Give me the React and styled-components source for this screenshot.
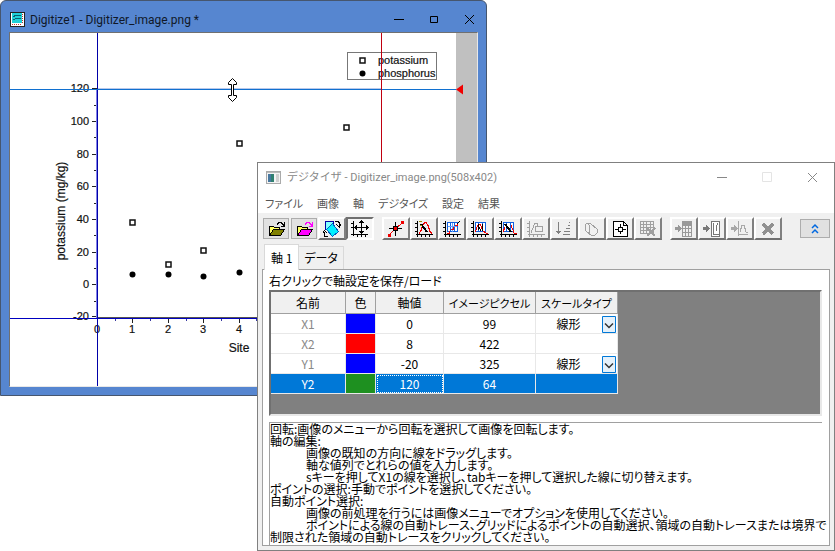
import React from 'react';
import styled, { createGlobalStyle, css } from 'styled-components';

const ui = 'Roboto, "Noto Sans CJK JP", sans-serif';
const gothic = '"Noto Sans CJK JP", sans-serif';

const GlobalStyle = createGlobalStyle`
* {
  box-sizing: border-box;
}

body {
  margin: 0;
  background: #fff;
  color: #000;
  font-family: ${gothic};
  font-size: 12px;
  font-feature-settings: "palt";
}

button, select {
  font: inherit;
  font-feature-settings: inherit;
  color: inherit;
  margin: 0;
}
`;

const majorY = [
  ['120', 88], ['100', 121], ['80', 154], ['60', 186],
  ['40', 219], ['20', 252], ['0', 284], ['-20', 316],
];
const minorY = [105, 137, 170, 203, 235, 268, 301];
const majorX = [['0', 97], ['1', 132], ['2', 168], ['3', 203], ['4', 239]];
const minorX = [115, 150, 186, 221, 256];
const potassium = [[132, 222], [168, 264], [203, 250], [239, 143], [346, 127], [362, 60]];
const phosphorus = [[132, 274], [168, 274], [203, 276], [239, 272], [362, 73]];

function Chart() {
  return (
    <ChartSvg viewBox="10 33 467 353" role="img" aria-label="potassium / phosphorus">
      <rect x="10" y="33" width="467" height="353" fill="#fff" />
      <rect x="456" y="33" width="21" height="353" fill="#c0c0c0" />
      <g stroke="#222">
        {majorY.map(([t, y]) => <path key={t} d={`M92 ${y + 0.5}h5`} />)}
        {minorY.map(y => <path key={y} d={`M94 ${y + 0.5}h3`} />)}
        {majorX.map(([t, x]) => <path key={t} d={`M${x + 0.5} 318v5`} />)}
        {minorX.map(x => <path key={x} d={`M${x + 0.5} 318v3`} stroke="#3838a0" />)}
      </g>
      <g fontSize="11" fill="#111" stroke="#111" strokeWidth="0.2">
        {majorY.map(([t, y]) => <text key={t} x="89" y={y + 4} textAnchor="end">{t}</text>)}
        {majorX.map(([t, x]) => <text key={t} x={x} y="333" textAnchor="middle">{t}</text>)}
        <text x="378" y="64">potassium</text>
        <text x="378" y="77">phosphorus</text>
        <text x="239" y="352" fontSize="12" textAnchor="middle">Site</text>
        <text fontSize="12" textAnchor="middle" transform="translate(65 211) rotate(-90)">potassium (mg/kg)</text>
      </g>
      <rect x="347.5" y="52.5" width="89" height="27" fill="none" stroke="#777" />
      {potassium.map(([x, y]) => (
        <rect key={x} x={x - 2} y={y - 2} width="5" height="5" fill="#fff" stroke="#111" strokeWidth="1.5" />
      ))}
      {phosphorus.map(([x, y]) => <circle key={x} cx={x + 0.5} cy={y + 0.5} r="3" />)}
      <g shapeRendering="crispEdges">
        <rect x="97" y="317" width="383" height="1" fill="#555" />
        <rect x="97" y="33" width="1" height="353" fill="#0000a8" />
        <rect x="96" y="89" width="1" height="229" fill="#8080e8" />
        <rect x="10" y="318" width="446" height="1" fill="#0000c0" />
        <rect x="98" y="88" width="283" height="1" fill="#b8c8ea" />
        <rect x="10" y="89" width="446" height="1" fill="#1070d0" />
        <rect x="381" y="33" width="1" height="353" fill="#c00010" />
      </g>
      <path d="M456 89.5l7-5v10z" fill="#f00000" />
      <path
        d="M232.5 78.500l4 4v2h-3v11h3v2l-4 4-4-4v-2h3v-11h-3v-2z"
        fill="#fff"
        stroke="#000"
        strokeWidth="1"
      />
    </ChartSvg>
  );
}

const axes = <path d="M2.500 1v16M1 14.500h17M0 3.500h2M0 7.500h2M0 11.500h2M6.500 15v2M10.500 15v2M14.500 15v2" />;
const curve = <path d="M4 13.500l2-3 2-6 2-2h1l2 3 2 6 2 2" stroke="#f00000" />;
const wand = <path d="M6.500 4l6 8M5.500 4l6 8" />;
const spark = <path d="M4 1.500h3M4.500 5.500h2" stroke="#a09000" />;
const blueBox = (
  <>
    <rect x="4.500" y="2.500" width="10" height="9" fill="#fff" stroke="#1060e0" />
    <path d="M7.500 3v9M11.500 3v9" stroke="#1060e0" />
  </>
);

const folder = front => (
  <>
    <path d="M2.500 15V6.500h4l1 1h5V10" fill="#ffff60" />
    <path d="M2.500 15.500l4-6h11l-4 6z" fill={front} />
    <path d="M10 4.500l2-2h2l3 3M17.500 2v4h-4" stroke={front === '#ff00ff' ? '#ff00ff' : '#000'} />
  </>
);

const icons = {
  open: folder('#808000'),
  openPink: folder('#ff00ff'),
  rotate: (
    <>
      <path d="M2.500 1.500h8v8h-8z" fill="#80ffff" stroke="#0000a0" />
      <path d="M9.500 3.500l6 8-6 5-6-7z" fill="#00f0ff" stroke="#0060c0" />
      <path d="M12 1.500h3l1 1v4M13.500 4.500l3 3 1-3M5 16.500h-3l-1-1v-4M-0.500 13.500l2-3 3 3" />
    </>
  ),
  axes: (
    <>
      <path d="M2.500 1v15M0 14.500h17M0 3.500h2M0 7.500h2M6.500 15v2M10.500 15v2M14.500 15v2" />
      <path d="M10.500 1v12M4 7.500h13M8.500 3l2-2 2 2M8.500 11l2 2 2-2M6 5.500l-2 2 2 2M15 5.500l2 2-2 2" />
    </>
  ),
  point: (
    <>
      <path d="M2 15L16 2" stroke="#f00000" />
      <path d="M1 14h3v3H1zM14 1h3v3h-3z" fill="#f00000" stroke="none" />
      <path d="M8.500 2v14M2 8.500h13" />
      <rect x="6.500" y="6.500" width="4" height="4" fill="#f00000" />
    </>
  ),
  trace: <>{axes}{curve}{wand}{spark}</>,
  grid: (
    <>
      {axes}{blueBox}
      <path d="M9.500 3v9M5 6.500h9" stroke="#60a0ff" />
      <path d="M4 13h2v-2M8 9h2v-2M12 5h2v-2" stroke="#f00000" />
      <path d="M14 4l3-3" />
    </>
  ),
  areaTrace: (
    <>
      {axes}{blueBox}
      <path d="M4 12l3-7 2-1 3 7 3 2h2" stroke="#f00000" />
      <path d="M7 4l1 6M8 7l2 4M11 4l1 7" />
    </>
  ),
  boundTrace: <>{axes}{blueBox}<path d="M4 12l2-5M12 5l3 8h3" stroke="#f00000" />{wand}</>,
  region: <>{axes}<path d="M4 13l3-8 1-2h2l1 3M8.500 6.500h7v5h-7z" /></>,
  sort: <path d="M3.500 2v12M1 11.500h5M2 12.500h3M14 2.500h1M13 5.500h2M11 8.500h4M9 11.500h6M8 14.500h7" />,
  eraser: <path d="M2.500 3.500h5l7 6v3l-3 3h-3l-4-3M2.500 3.500v7l2 2h2v-7l-2-2" />,
  target: (
    <>
      <path d="M2.500 1.500h10l4 4v11h-14zM12.500 1.500v4h4" fill="#fff" />
      <path d="M9.500 4v10M4 9.500h11" />
      <rect x="7.500" y="7.500" width="4" height="4" fill="#fff" />
    </>
  ),
  gridDelete: (
    <>
      <path d="M1.500 1.500h13v12h-13zM1 4.500h13M1 7.500h13M1 10.500h13M4.500 1v13M7.500 1v13M11.500 1v13" />
      <path d="M8 8l8 8M16 8l-8 8" strokeWidth="2" />
    </>
  ),
  toSheet: (
    <>
      <path d="M0 8.500h4" strokeWidth="3" />
      <path d="M3 4.500v8l4-4z" fill="#999" stroke="none" />
      <path d="M7.500 1.500h9v15h-9zM7 5.500h9M7 8.500h9M7 12.500h9M10.500 2v14M13.500 2v14" />
      <path d="M7 3h10" strokeWidth="4" />
    </>
  ),
  toGraph: (
    <>
      <path d="M0 8.500h4" strokeWidth="3" />
      <path d="M3 4.500v8l4-4z" fill="#777" stroke="none" />
      <path d="M8.500 1.500h8v15h-8z" fill="#fff" />
      <path d="M10.500 3v11h5M13 11v-4l2-4" />
    </>
  ),
  toCurve: (
    <>
      <path d="M0 8.500h4" strokeWidth="3" />
      <path d="M3 4.500v8l4-4z" fill="#a8a8a8" stroke="none" />
      <path d="M7.500 1v15M7 14.500h10M9 12l2-7h2l2 7h2" />
    </>
  ),
  remove: <path d="M4 4l10 10M14 4L4 14" strokeWidth="4" />,
};

function Tool({ icon, label, look, dim }) {
  return (
    <ToolButton type="button" aria-label={label} $look={look} disabled={!!dim}>
      <svg width="18" height="18" viewBox="0 0 18 18" fill="none" stroke={dim || '#000'} shapeRendering="crispEdges">
        {icons[icon]}
      </svg>
    </ToolButton>
  );
}

const rows = [
  { name: 'X1', color: '#0000ff', value: '0', pixel: '99', scale: true },
  { name: 'X2', color: '#ff0000', value: '8', pixel: '422' },
  { name: 'Y1', color: '#0000ff', value: '-20', pixel: '325', scale: true },
  { name: 'Y2', color: '#1e9020', value: '120', pixel: '64', selected: true },
];

function AxisTable() {
  return (
    <GridArea>
      <Table>
        <colgroup>
          <col width="75" />
          <col width="30" />
          <col width="68" />
          <col width="92" />
          <col width="82" />
        </colgroup>
        <thead>
          <tr>
            <HeadCell>名前</HeadCell>
            <HeadCell>色</HeadCell>
            <HeadCell>軸値</HeadCell>
            <HeadCell $long>イメージピクセル</HeadCell>
            <HeadCell $long>スケールタイプ</HeadCell>
          </tr>
        </thead>
        <tbody>
          {rows.map(row => (
            <Row key={row.name} $selected={row.selected}>
              <Cell $muted={!row.selected}>{row.name}</Cell>
              <Cell $fill={row.color} />
              <Cell $focused={row.selected}>{row.value}</Cell>
              <Cell>{row.pixel}</Cell>
              <Cell>
                {row.scale && (
                  <ScaleBox>
                    <select aria-label={`${row.name} スケールタイプ`}>
                      <option>線形</option>
                    </select>
                    <svg width="14" height="17" viewBox="0 0 14 17" fill="#e5f1fb" stroke="#0078d7">
                      <path d="M0.500 0.500h13v16h-13z" />
                      <path d="M3 7.500l4 4 4-4" fill="none" stroke="#333" strokeWidth="1.500" />
                    </svg>
                  </ScaleBox>
                )}
              </Cell>
            </Row>
          ))}
        </tbody>
      </Table>
    </GridArea>
  );
}

function Controls({ idle }) {
  return (
    <ControlList $idle={idle}>
      <button type="button" aria-label="最小化">
        <svg width="11" height="11" viewBox="0 0 11 11"><path d="M0 5.500h10" /></svg>
      </button>
      <button type="button" aria-label="最大化" disabled={idle}>
        <svg width="11" height="11" viewBox="0 0 11 11">
          {idle
            ? <path d="M0.500 0.500h9v9h-9z" stroke="#e4e4e4" />
            : <path d="M1.500 2.500h7v6h-7z" />}
        </svg>
      </button>
      <button type="button" aria-label="閉じる">
        <svg width="11" height="11" viewBox="0 0 11 11"><path d="M1 1l9 9M10 1l-9 9" /></svg>
      </button>
    </ControlList>
  );
}

export default function App() {
  return (
    <Desktop>
      <GlobalStyle />
      <GraphWindow>
        <GraphTitle>
          <svg width="15" height="15" viewBox="0 0 15 15" shapeRendering="crispEdges">
            <path d="M0 0h15v15H0z" fill="#222" />
            <path d="M1 1h13v13H1z" fill="#fff" />
            <path d="M2 1h10v10H2z" fill="#20d0d8" />
            <path d="M3 5l3-2h5M3 8l4-2h4" stroke="#086070" fill="none" />
            <path d="M2 12.500h10M12.500 2v10" stroke="#c03030" strokeDasharray="1 1" />
          </svg>
          <h1>Digitize1 - Digitizer_image.png *</h1>
          <Controls />
        </GraphTitle>
        <Chart />
      </GraphWindow>

      <Dialog>
        <DialogTitle>
          <svg width="15" height="13" viewBox="0 0 15 13" shapeRendering="crispEdges">
            <path d="M0.500 0.500h14v12h-14z" fill="#f4f4f4" stroke="#aaa" />
            <path d="M1 1h13v1H1z" fill="#bbb" />
            <path d="M2 3h6v8H2z" fill="#308070" />
            <path d="M2 3h3v8H2z" fill="#4878a0" />
            <path d="M10 3h3v8h-3z" fill="#d0d0d0" />
          </svg>
          <h2>デジタイザ - Digitizer_image.png(508x402)</h2>
          <Controls idle />
        </DialogTitle>
        <MenuBar>
          {['ファイル', '画像', '軸', 'デジタイズ', '設定', '結果'].map(item => (
            <button type="button" key={item}>{item}</button>
          ))}
        </MenuBar>
        <Toolbar>
          <ToolGroup>
            <Tool icon="open" label="開く" look="flat" />
            <Tool icon="openPink" label="設定を開く" look="flat" />
            <Tool icon="rotate" label="画像の回転" />
            <Tool icon="axes" label="軸の編集" look="pressed" />
          </ToolGroup>
          <ToolGroup>
            <Tool icon="point" label="ポイントの選択" />
            <Tool icon="trace" label="線の自動トレース" />
            <Tool icon="grid" label="グリッドによる選択" />
            <Tool icon="areaTrace" label="領域の自動トレース" />
            <Tool icon="boundTrace" label="境界の自動トレース" />
            <Tool icon="region" label="領域" dim="#a0a0a0" />
            <Tool icon="sort" label="並べ替え" dim="#808080" />
            <Tool icon="eraser" label="消しゴム" dim="#a0a0a0" />
            <Tool icon="target" label="中心" />
            <Tool icon="gridDelete" label="グリッドの削除" dim="#a0a0a0" />
          </ToolGroup>
          <ToolGroup>
            <Tool icon="toSheet" label="シートへ" dim="#999" />
            <Tool icon="toGraph" label="グラフへ" dim="#777" />
            <Tool icon="toCurve" label="曲線へ" dim="#a8a8a8" />
            <Tool icon="remove" label="削除" dim="#909090" />
          </ToolGroup>
          <CollapseButton type="button" aria-label="折りたたむ">
            <svg width="8" height="11" viewBox="0 0 8 11" fill="none" stroke="#0068e0" strokeWidth="1.500">
              <path d="M1 5l3-3 3 3M1 10l3-3 3 3" />
            </svg>
          </CollapseButton>
        </Toolbar>
        <Tabs role="tablist">
          <Tab type="button" role="tab" aria-selected="true" $active>軸 1</Tab>
          <Tab type="button" role="tab" aria-selected="false">データ</Tab>
        </Tabs>
        <Pane role="tabpanel">
          <Hint>右クリックで軸設定を保存/ロード</Hint>
          <AxisTable />
          <Help>
            <p>回転:画像のメニューから回転を選択して画像を回転します。</p>
            <p>軸の編集:</p>
            <HelpStep>画像の既知の方向に線をドラッグします。</HelpStep>
            <HelpStep>軸な値列でとれらの値を入力します。</HelpStep>
            <HelpStep>sキーを押してX1の線を選択し、tabキーを押して選択した線に切り替えます。</HelpStep>
            <p>ポイントの選択:手動でポイントを選択してください。</p>
            <p>自動ポイント選択:</p>
            <HelpStep>画像の前処理を行うには画像メニューでオプションを使用してください。</HelpStep>
            <HelpStep>
              ポイントによる線の自動トレース、グリッドによるポイントの自動選択、領域の自動トレースまたは境界で<br />
              制限された領域の自動トレースをクリックしてください。
            </HelpStep>
          </Help>
        </Pane>
      </Dialog>
    </Desktop>
  );
}

const Desktop = styled.main`
position: relative;
min-height: 100vh;
overflow: hidden;
`;

const GraphWindow = styled.section`
position: absolute;
top: 0;
left: 0;
padding: 0 8px 8px;
background: #5686d0;
border: 1px solid #46566e;
border-radius: 6px 6px 0 0;
`;

const GraphTitle = styled.header`
display: flex;
align-items: center;
gap: 5px;
height: 31px;
padding: 6px 0 0 1px;

h1 {
  flex: 1;
  margin: 0;
  font: 12px/16px ${ui};
  color: #101828;
}
`;

const ControlList = styled.div`
display: flex;
gap: ${p => (p.$idle ? '34px' : '24px')};
padding-right: ${p => (p.$idle ? '16px' : '3px')};

button {
  display: flex;
  padding: 0;
  border: 0;
  background: none;
}

svg {
  fill: none;
  stroke: ${p => (p.$idle ? '#888' : '#000')};
}
`;

const ChartSvg = styled.svg`
display: block;
box-sizing: content-box;
width: 467px;
height: 353px;
border: 1px solid #e8e8e8;
border-top-color: #707070;
border-left-color: #707070;
font-family: "Liberation Sans", sans-serif;
`;

const Dialog = styled.section`
position: absolute;
top: 162px;
left: 257px;
right: 0;
background: #f0f0f0;
border: 1px solid #808080;
padding-bottom: 4px;
`;

const DialogTitle = styled.header`
display: flex;
align-items: center;
gap: 6px;
height: 29px;
padding-left: 8px;
background: #fff;

h2 {
  flex: 1;
  margin: 0;
  font: 11px/16px ${ui};
  color: #888;
}
`;

const MenuBar = styled.nav`
display: flex;
gap: 14px;
height: 21px;
padding: 0 7px;
background: #fff;

button {
  padding: 0;
  border: 0;
  background: none;
  color: #555;
  font-size: 11px;
  line-height: 18px;
}
`;

const Toolbar = styled.div`
display: flex;
align-items: center;
gap: 8px;
height: 31px;
padding: 0 4px;
`;

const ToolGroup = styled.div`
display: flex;
align-items: center;
`;

const ToolButton = styled.button`
display: flex;
align-items: center;
justify-content: center;
width: 28px;
height: 23px;
padding: 0;
background: #f0f0f0;
border: 2px solid;
border-color: #fff #808080 #707070 #fff;

${p => p.$look === 'flat' && css`
  width: 26px;
  height: 21px;
  margin: 0 1px;
  background: #e1e1e1;
  border: 1px solid #adadad;
`}

${p => p.$look === 'pressed' && css`
  background: #f6f6f6;
  border-color: #707070 #fff #fff #707070;
`}
`;

const CollapseButton = styled.button`
display: flex;
align-items: center;
justify-content: center;
width: 30px;
height: 19px;
margin-left: auto;
padding: 0;
background: #e1e1e1;
border: 1px solid #adadad;
`;

const Tabs = styled.div`
display: flex;
align-items: flex-end;
padding-left: 6px;
`;

const Tab = styled.button`
height: 23px;
padding: 0 5px;
background: #f0f0f0;
border: 1px solid #d9d9d9;
border-width: 1px 1px 0 0;
font-size: 12px;
line-height: 20px;

${p => p.$active && css`
  height: 26px;
  margin-bottom: -1px;
  padding: 0 6px;
  background: #fff;
  border-width: 1px 1px 0 1px;
  z-index: 1;
`}
`;

const Pane = styled.div`
margin: 0 4px;
padding: 2px 7px 0 6px;
background: #fff;
border: 1px solid #a0a0a0;
`;

const Hint = styled.p`
margin: 0;
line-height: 18px;
`;

const GridArea = styled.div`
height: 126px;
background: #808080;
border: 2px solid;
border-color: #707070 #e8e8e8 #e8e8e8 #707070;
`;

const Table = styled.table`
table-layout: fixed;
width: 347px;
border-collapse: separate;
border-spacing: 0;
background: #fff;
`;

const HeadCell = styled.th`
height: 22px;
padding: 0;
background: #f0f0f0;
border-right: 1px solid #a0a0a0;
border-bottom: 1px solid #a0a0a0;
font-size: ${p => (p.$long ? '11px' : '12px')};
font-weight: normal;
line-height: 18px;
white-space: nowrap;
`;

const Row = styled.tr`
${p => p.$selected && css`
  background: #0078d7;
  color: #fff;
`}
`;

const Cell = styled.td`
height: 20px;
padding: 0;
border-right: 1px solid #e8e8e8;
border-bottom: 1px solid #e8e8e8;
background: ${p => p.$fill || 'transparent'};
color: ${p => (p.$muted ? '#888' : 'inherit')};
text-align: center;
line-height: 18px;
${p => p.$focused && 'outline: 1px dotted #fff; outline-offset: -2px;'}
`;

const ScaleBox = styled.div`
position: relative;

select {
  display: block;
  width: 100%;
  height: 18px;
  padding: 0 16px 0 0;
  border: 0;
  background: none;
  appearance: none;
  text-align: center;
  text-align-last: center;
}

svg {
  position: absolute;
  top: 1px;
  right: 1px;
  pointer-events: none;
}
`;

const Help = styled.div`
margin-top: 6px;
height: 123px;
border-top: 1px solid #a0a0a0;
border-left: 1px solid #a0a0a0;
line-height: 12px;
white-space: nowrap;

p {
  margin: 0;
}
`;

const HelpStep = styled.p`
text-indent: 36px;
`;
